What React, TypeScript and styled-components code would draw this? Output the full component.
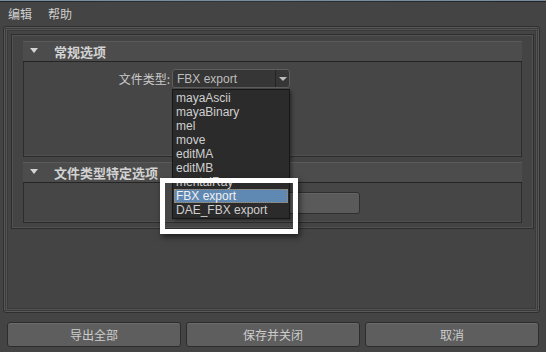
import styled, { createGlobalStyle } from "styled-components";

const GlobalStyle = createGlobalStyle`
    html, body {
        margin: 0;
        padding: 0;
        background: #444444;
    }
    * {
        box-sizing: border-box;
    }
`;

const cjk = `"Noto Sans CJK SC", "Liberation Sans", sans-serif`;
const latin = `"Liberation Sans", "Noto Sans CJK SC", sans-serif`;

const Root = styled.div`
    position: relative;
    width: 546px;
    height: 352px;
    display: flex;
    flex-direction: column;
    background: #444444;
    color: #c8c8c8;
    font-family: ${cjk};
    font-size: 12px;
    overflow: hidden;
`;

const TopEdge = styled.div`
    height: 2px;
    border-top: 1px solid #7d8b97;
    background: linear-gradient(90deg, #1d252d, #2b3640 40%, #1d242b);
`;

const MenuBar = styled.div`
    height: 24px;
    display: flex;
    align-items: center;
    gap: 16px;
    padding: 0 0 0 8px;
`;

const MenuItem = styled.span`
    font-size: 12px;
    line-height: 12px;
    color: #cfcfcf;
`;

const Frame = styled.div`
    height: 287px;
    margin: 0 6px 0 3px;
    padding: 7px 5px 0 7px;
    border: 1px solid #2f2f2f;
    border-radius: 3px;
    box-shadow:
        inset 0 0 0 1px #585858,
        inset 0 0 0 2px #3b3b3b,
        inset 0 0 0 3px #525252,
        inset 0 0 0 4px #3a3a3a;
`;

const ScrollArea = styled.div`
    height: 195px;
    padding: 6px 11px 0 11px;
    border: 1px solid #2e2e2e;
    box-shadow: inset 0 0 0 1px #525252;
`;

const Section = styled.div`
    display: flex;
    flex-direction: column;
    margin-bottom: 5px;
`;

const SectionHeader = styled.div`
    height: 21px;
    display: flex;
    align-items: center;
    padding-left: 7px;
    background: #4c4c4c;
    border-top: 1px solid #5a5a5a;
    border-bottom: 1px solid #242424;
`;

const Caret = styled.span`
    width: 0;
    height: 0;
    border-left: 4.5px solid transparent;
    border-right: 4.5px solid transparent;
    border-top: 5px solid #d4d4d4;
    margin-top: -3px;
`;

const HeaderTitle = styled.span`
    margin-left: 16px;
    font-size: 13px;
    font-weight: bold;
    color: #d2d2d2;
    line-height: 13px;
`;

const SectionBody = styled.div<{ $h: number; $pt: number }>`
    position: relative;
    height: ${(p) => p.$h}px;
    padding-top: ${(p) => p.$pt}px;
    background: #464646;
    border: 1px solid #2c2c2c;
    border-top: none;
    box-shadow: inset 0 -1px 0 #4f4f4f;
`;

const FieldRow = styled.div`
    display: flex;
    align-items: center;
`;

const FieldLabel = styled.span`
    width: 147px;
    text-align: right;
    padding-right: 1px;
    font-size: 12px;
    color: #cacaca;
`;

const ComboWrap = styled.div`
    position: relative;
    margin-left: 1px;
    z-index: 5;
`;

const Combo = styled.div`
    width: 118px;
    height: 19px;
    display: flex;
    align-items: stretch;
    background: #363636;
    border: 1px solid #5e5e5e;
    border-radius: 3px;
    font-family: ${latin};
    font-size: 12px;
    color: #bdbdbd;
`;

const ComboText = styled.span`
    flex: 1;
    display: flex;
    align-items: center;
    padding-left: 4px;
`;

const ComboArrow = styled.span`
    width: 14px;
    display: flex;
    align-items: center;
    justify-content: center;
    border-left: 1px solid #232323;
    &::after {
        content: "";
        border-left: 4px solid transparent;
        border-right: 4px solid transparent;
        border-top: 4px solid #bdbdbd;
    }
`;

const DropList = styled.ul`
    position: absolute;
    left: 0;
    top: 20px;
    width: 118px;
    margin: 0;
    padding: 1px;
    list-style: none;
    background: #2b2b2b;
    border: 1px solid #161616;
    box-shadow: 2px 2px 3px rgba(0, 0, 0, 0.35);
`;

const DropItem = styled.li<{ $active?: boolean }>`
    height: 14px;
    line-height: 14px;
    padding-left: 2px;
    font-family: ${latin};
    font-size: 12px;
    white-space: nowrap;
    color: ${(p) => (p.$active ? "#f0f0f0" : "#cfcfcf")};
    background: ${(p) => (p.$active ? "#5f88b3" : "transparent")};
    outline: ${(p) => (p.$active ? "1px dotted #b08a5a" : "none")};
    outline-offset: -1px;
`;

const GhostButton = styled.div`
    margin-left: 149px;
    width: 187px;
    height: 22px;
    background: #5a5a5a;
    border: 1px solid #2f2f2f;
    border-radius: 3px;
    box-shadow: inset 0 1px 0 #646464;
`;

const ButtonRow = styled.div`
    display: flex;
    gap: 5px;
    padding: 9px 7px 0 7px;
`;

const DialogButton = styled.button`
    flex: 1;
    height: 25px;
    padding: 0;
    background: #5e5e5e;
    border: 1px solid #2c2c2c;
    border-radius: 3px;
    box-shadow: inset 0 1px 0 #6c6c6c;
    font-family: ${cjk};
    font-size: 12px;
    color: #cdcdcd;
`;

const Callout = styled.div`
    position: absolute;
    left: 160px;
    top: 178px;
    width: 138px;
    height: 56px;
    border: 5px solid #ffffff;
    box-shadow: 2px 3px 6px rgba(0, 0, 0, 0.55);
    z-index: 10;
    pointer-events: none;
`;

const fileTypes = [
    "mayaAscii",
    "mayaBinary",
    "mel",
    "move",
    "editMA",
    "editMB",
    "mentalRay",
    "FBX export",
    "DAE_FBX export",
];

export default function App() {
    const current = "FBX export";
    return (
        <>
            <GlobalStyle />
            <Root>
                <TopEdge />
                <MenuBar>
                    <MenuItem>编辑</MenuItem>
                    <MenuItem>帮助</MenuItem>
                </MenuBar>

                <Frame>
                    <ScrollArea>
                        <Section>
                            <SectionHeader>
                                <Caret />
                                <HeaderTitle>常规选项</HeaderTitle>
                            </SectionHeader>
                            <SectionBody $h={95} $pt={7}>
                                <FieldRow>
                                    <FieldLabel>文件类型:</FieldLabel>
                                    <ComboWrap>
                                        <Combo>
                                            <ComboText>{current}</ComboText>
                                            <ComboArrow />
                                        </Combo>
                                        <DropList>
                                            {fileTypes.map((t) => (
                                                <DropItem key={t} $active={t === current}>
                                                    {t}
                                                </DropItem>
                                            ))}
                                        </DropList>
                                    </ComboWrap>
                                </FieldRow>
                            </SectionBody>
                        </Section>

                        <Section>
                            <SectionHeader>
                                <Caret />
                                <HeaderTitle>文件类型特定选项</HeaderTitle>
                            </SectionHeader>
                            <SectionBody $h={40} $pt={9}>
                                <GhostButton />
                            </SectionBody>
                        </Section>
                    </ScrollArea>
                </Frame>

                <ButtonRow>
                    <DialogButton>导出全部</DialogButton>
                    <DialogButton>保存并关闭</DialogButton>
                    <DialogButton>取消</DialogButton>
                </ButtonRow>

                <Callout />
            </Root>
        </>
    );
}
